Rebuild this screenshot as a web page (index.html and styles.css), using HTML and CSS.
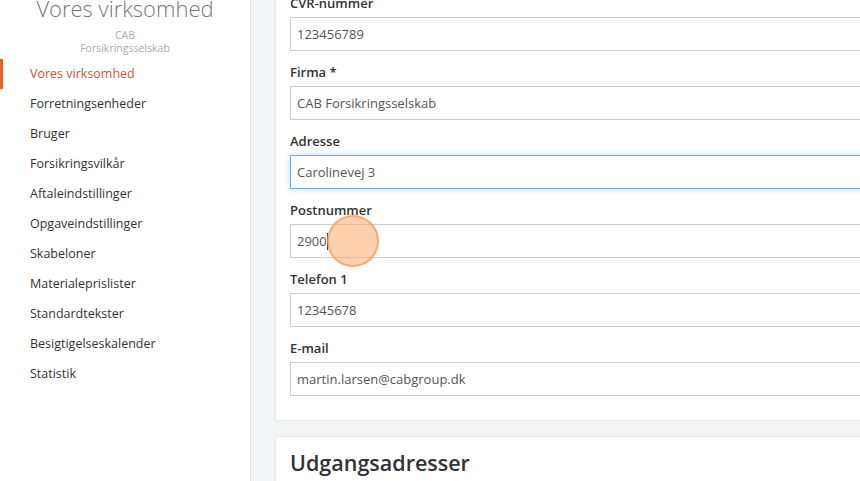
FILE: index.html
```html
<!DOCTYPE html>
<html lang="da">
<head>
  <meta charset="UTF-8">
  <meta name="viewport" content="width=device-width, initial-scale=1.0">
  <title>Vores virksomhed</title>
  <link rel="stylesheet" href="styles.css">
</head>
<body>
  <div class="layout">
    <aside class="sidebar">
      <div class="brand">
        <h2 class="brand-title">Vores virksomhed</h2>
        <div class="brand-company">CAB<br>Forsikringsselskab</div>
      </div>
      <nav class="side-nav">
        <a href="#" class="active">Vores virksomhed</a>
        <a href="#">Forretningsenheder</a>
        <a href="#">Bruger</a>
        <a href="#">Forsikringsvilkår</a>
        <a href="#">Aftaleindstillinger</a>
        <a href="#">Opgaveindstillinger</a>
        <a href="#">Skabeloner</a>
        <a href="#">Materialeprislister</a>
        <a href="#">Standardtekster</a>
        <a href="#">Besigtigelseskalender</a>
        <a href="#">Statistik</a>
      </nav>
    </aside>

    <main class="content">
      <section class="card">
        <div class="form-group">
          <label for="cvr">CVR-nummer</label>
          <input type="text" id="cvr" value="123456789">
        </div>
        <div class="form-group">
          <label for="firma">Firma *</label>
          <input type="text" id="firma" value="CAB Forsikringsselskab">
        </div>
        <div class="form-group">
          <label for="adresse">Adresse</label>
          <input type="text" id="adresse" class="focused" value="Carolinevej 3">
        </div>
        <div class="form-group">
          <label for="postnr">Postnummer</label>
          <div class="field-wrap">
            <div class="fake-input">2900<span class="caret"></span></div>
            <span class="click-marker"></span>
          </div>
        </div>
        <div class="form-group">
          <label for="tlf">Telefon 1</label>
          <input type="text" id="tlf" value="12345678">
        </div>
        <div class="form-group">
          <label for="email">E-mail</label>
          <input type="text" id="email" value="martin.larsen@cabgroup.dk">
        </div>
      </section>

      <section class="card">
        <h2 class="card-title">Udgangsadresser</h2>
      </section>
    </main>
  </div>
</body>
</html>
```

FILE: styles.css
```css
:root {
  --accent: #e8622a;
  --active-text: #c8553d;
  --text-color: #333;
  --muted: #777;
  --page-bg: #f3f4f6;
  --input-border: #ccc;
}
* { box-sizing: border-box; }
html, body {
  margin: 0;
  height: 100%;
  overflow: hidden;
}
body {
  font-family: "Open Sans", Arial, sans-serif;
  font-size: 13px;
  color: var(--text-color);
  background: var(--page-bg);
}
.layout {
  display: flex;
  align-items: stretch;
  min-height: 100%;
  margin-top: -30px;
}

/* sidebar */
.sidebar {
  width: 251px;
  flex-shrink: 0;
  background: #fff;
  border-right: 1px solid #e1e1e1;
  padding-bottom: 200px;
}
.brand {
  text-align: center;
  padding-top: 24px;
}
.brand-title {
  margin: 0;
  font-size: 22px;
  font-weight: 300;
  color: var(--muted);
  line-height: 28px;
}
.brand-company {
  margin-top: 7px;
  font-size: 10.5px;
  line-height: 13px;
  color: #aaa;
}
.side-nav {
  margin-top: 4px;
}
.side-nav a {
  display: block;
  height: 30px;
  line-height: 30px;
  padding-left: 27px;
  font-size: 12.5px;
  color: var(--text-color);
  text-decoration: none;
  border-left: 3px solid transparent;
}
.side-nav a.active {
  color: var(--active-text);
  border-left-color: var(--accent);
}

/* main */
.content {
  flex: 1;
  min-width: 700px;
  padding-left: 24px;
  padding-top: 8px;
}
.card {
  background: #fff;
  border: 1px solid #e8e9ec;
  border-radius: 2px;
  padding: 14px 0 24px 14px;
  margin-bottom: 15px;
  width: 700px;
}
.form-group {
  margin-bottom: 11px;
}
.form-group:last-child {
  margin-bottom: 0;
}
label {
  display: block;
  font-weight: 600;
  line-height: 20px;
  margin-bottom: 4px;
}
input[type="text"], .fake-input {
  display: block;
  width: 100%;
  height: 34px;
  padding: 0 6px;
  border: 1px solid var(--input-border);
  border-radius: 0;
  font-family: inherit;
  font-size: 13px;
  color: #555;
  background: #fff;
  outline: none;
}
.fake-input {
  line-height: 32px;
}
input.focused {
  border-color: #66afe9;
  box-shadow: 0 0 6px rgba(102, 175, 233, 0.45);
}
.caret {
  display: inline-block;
  width: 1px;
  height: 17px;
  background: #333;
  vertical-align: middle;
  margin-top: -2px;
}
.field-wrap {
  position: relative;
}
.click-marker {
  position: absolute;
  left: 37px;
  top: -9px;
  width: 52px;
  height: 52px;
  border-radius: 50%;
  background: rgba(251, 176, 120, 0.6);
  border: 2px solid rgba(240, 150, 80, 0.65);
}
.card-title {
  margin: -3px 0 0;
  font-size: 21.5px;
  font-weight: 600;
  color: #333;
  line-height: 30px;
}
```
